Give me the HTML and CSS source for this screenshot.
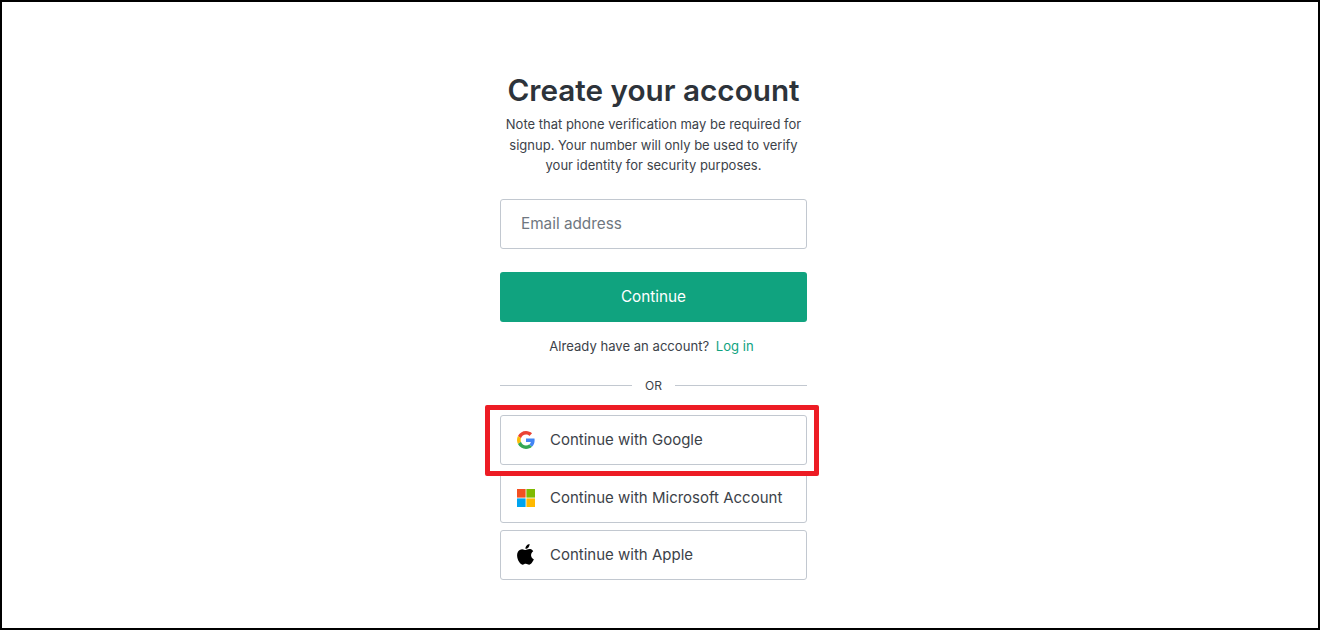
FILE: index.html
```html
<!DOCTYPE html>
<html lang="en">
<head>
<meta charset="utf-8">
<title>Create your account</title>
<link rel="stylesheet" href="styles.css">
</head>
<body>
<main class="frame">
  <section class="panel">
    <h1 class="title">Create your account</h1>
    <p class="note">Note that phone verification may be required for signup. Your number will only be used to verify your identity for security purposes.</p>
    <form class="form">
      <div class="field">Email address</div>
      <div class="primary">Continue</div>
    </form>
    <p class="login">Already have an account? <a class="link">Log in</a></p>
    <div class="divider"><span class="rule"></span><span class="or">OR</span><span class="rule"></span></div>
    <div class="socials">
      <div class="social">
        <svg class="icon" viewBox="0 0 48 48"><path fill="#EA4335" d="M24 9.5c3.54 0 6.71 1.22 9.21 3.6l6.85-6.85C35.9 2.38 30.47 0 24 0 14.62 0 6.51 5.38 2.56 13.22l7.98 6.19C12.43 13.72 17.74 9.5 24 9.5z"/><path fill="#4285F4" d="M46.98 24.55c0-1.57-.15-3.09-.38-4.55H24v9.02h12.94c-.58 2.96-2.26 5.48-4.78 7.18l7.73 6c4.51-4.18 7.09-10.36 7.09-17.65z"/><path fill="#FBBC05" d="M10.53 28.59c-.48-1.45-.76-2.99-.76-4.59s.27-3.14.76-4.59l-7.98-6.19C.92 16.46 0 20.12 0 24c0 3.88.92 7.54 2.56 10.78l7.97-6.19z"/><path fill="#34A853" d="M24 48c6.48 0 11.93-2.13 15.89-5.81l-7.73-6c-2.15 1.45-4.92 2.3-8.16 2.3-6.26 0-11.57-4.22-13.47-9.91l-7.98 6.19C6.51 42.62 14.62 48 24 48z"/></svg>
        <span>Continue with Google</span>
      </div>
      <div class="social">
        <svg class="icon" viewBox="0 0 18 18"><rect width="8.6" height="8.6" fill="#F25022"/><rect x="9.4" width="8.6" height="8.6" fill="#7FBA00"/><rect y="9.4" width="8.6" height="8.6" fill="#00A4EF"/><rect x="9.4" y="9.4" width="8.6" height="8.6" fill="#FFB900"/></svg>
        <span>Continue with Microsoft Account</span>
      </div>
      <div class="social">
        <svg class="icon icon-tall" viewBox="3 1.6 18 20.8"><path fill="#000" d="M17.05 12.54c-.03-2.6 2.12-3.85 2.22-3.91-1.21-1.77-3.09-2.01-3.76-2.04-1.6-.16-3.12.94-3.93.94-.81 0-2.06-.92-3.39-.89-1.74.03-3.35 1.01-4.25 2.57-1.81 3.14-.46 7.8 1.3 10.35.86 1.25 1.89 2.65 3.24 2.6 1.3-.05 1.79-.84 3.36-.84 1.57 0 2.01.84 3.39.81 1.4-.02 2.28-1.27 3.14-2.53.99-1.45 1.4-2.85 1.42-2.92-.03-.01-2.72-1.04-2.74-4.14zM14.47 4.9c.72-.87 1.2-2.08 1.07-3.28-1.03.04-2.28.69-3.02 1.55-.66.77-1.24 2-1.09 3.18 1.15.09 2.32-.58 3.04-1.45z"/></svg>
        <span>Continue with Apple</span>
      </div>
    </div>
    <div class="highlight"></div>
  </section>
</main>
</body>
</html>
```
FILE: styles.css
```css
* { box-sizing: border-box; }
html, body { margin: 0; height: 100%; background: #fff; }
body { font-family: Inter, "Noto Sans", sans-serif; color: #2d333a; }
.frame {
  width: 1320px;
  height: 630px;
  border: 2px solid #000;
  display: flex;
  justify-content: flex-start;
  padding: 69px 0 0 498px;
  overflow: hidden;
}
.panel { position: relative; width: 307px; display: flex; flex-direction: column; }
.title {
  margin: 0 -20px;
  font-size: 29.7px;
  line-height: 38px;
  font-weight: 600;
  text-align: center;
  color: #2d333a;
}
.note {
  margin: 5px -5px 0;
  font-size: 13px;
  line-height: 20.5px;
  text-align: center;
  color: #3c4249;
  padding: 0 3px;
}
.form { display: flex; flex-direction: column; gap: 23px; margin-top: 23px; }
.field {
  height: 50px;
  border: 1px solid #c2c8d0;
  border-radius: 3px;
  display: flex;
  align-items: center;
  padding: 0 20px;
  font-size: 15.3px;
  color: #6f7780;
}
.primary {
  height: 50px;
  border-radius: 3px;
  background: #10a37f;
  color: #fff;
  display: flex;
  align-items: center;
  justify-content: center;
  font-size: 15.3px;
  font-weight: 400;
}
.login { margin: 14px 0 0; padding-right: 4px; height: 20px; font-size: 13.1px; line-height: 20px; text-align: center; color: #3c4249; }
.link { color: #10a37f; margin-left: 3px; }
.divider { display: flex; align-items: center; margin-top: 20px; height: 20px; }
.rule { flex: 1; height: 1px; background: #c2c8d0; }
.or { padding: 0 13px; font-size: 12px; color: #3c4249; }
.socials { display: flex; flex-direction: column; gap: 8px; margin-top: 19px; }
.social {
  height: 50px;
  border: 1px solid #c2c8d0;
  border-radius: 3px;
  display: flex;
  align-items: center;
  gap: 15px;
  padding-left: 16px;
  font-size: 15px;
  color: #3c4249;
}
.social:last-child { margin-top: -1px; }
.icon { width: 18px; height: 18px; flex: none; }
.icon-tall { height: 21px; }
.highlight {
  position: absolute;
  left: -15px;
  top: 334px;
  width: 334px;
  height: 71px;
  border: 5px solid #ed1c24;
  border-radius: 2px;
}
```
